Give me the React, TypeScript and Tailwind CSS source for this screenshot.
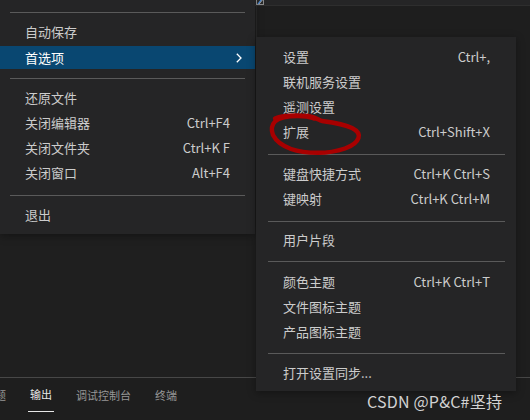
import React from "react";

type Row =
  | { kind: "item"; label: string; shortcut?: string; active?: boolean; sub?: boolean }
  | { kind: "sep"; cls: string };

const FONT = { fontFamily: '"Noto Sans CJK SC", "Noto Sans", sans-serif' };

const leftRows: Row[] = [
  { kind: "sep", cls: "h-[16px] pt-[8px]" },
  { kind: "item", label: "自动保存" },
  { kind: "item", label: "首选项", active: true, sub: true },
  { kind: "sep", cls: "h-[16px] pt-[8px]" },
  { kind: "item", label: "还原文件" },
  { kind: "item", label: "关闭编辑器", shortcut: "Ctrl+F4" },
  { kind: "item", label: "关闭文件夹", shortcut: "Ctrl+K F" },
  { kind: "item", label: "关闭窗口", shortcut: "Alt+F4" },
  { kind: "sep", cls: "h-[17px] pt-[9px]" },
  { kind: "item", label: "退出" },
];

const subRows: Row[] = [
  { kind: "item", label: "设置", shortcut: "Ctrl+," },
  { kind: "item", label: "联机服务设置" },
  { kind: "item", label: "遥测设置" },
  { kind: "item", label: "扩展", shortcut: "Ctrl+Shift+X" },
  { kind: "sep", cls: "h-[17px] pt-[9px]" },
  { kind: "item", label: "键盘快捷方式", shortcut: "Ctrl+K Ctrl+S" },
  { kind: "item", label: "键映射", shortcut: "Ctrl+K Ctrl+M" },
  { kind: "sep", cls: "h-[16px] pt-[9px]" },
  { kind: "item", label: "用户片段" },
  { kind: "sep", cls: "h-[17px] pt-[8px]" },
  { kind: "item", label: "颜色主题", shortcut: "Ctrl+K Ctrl+T" },
  { kind: "item", label: "文件图标主题" },
  { kind: "item", label: "产品图标主题" },
  { kind: "sep", cls: "h-[16px] pt-[8px]" },
  { kind: "item", label: "打开设置同步..." },
];

function Chevron() {
  return (
    <svg width="6" height="10" viewBox="0 0 6 10" className="ml-auto">
      <polyline points="0.8,0.8 5,5 0.8,9.2" fill="none" stroke="#ffffff" strokeWidth="1.3" />
    </svg>
  );
}

function LeftMenu() {
  return (
    <div className="absolute left-0 top-0 w-[255px] h-[234px] bg-[#252526] pt-[4px] shadow-[0_2px_8px_rgba(0,0,0,0.36)] flex flex-col">
      {leftRows.map((r, i) =>
        r.kind === "sep" ? (
          <div key={i} className={r.cls}>
            <div className="mx-[10px] h-px bg-[#5a5a5a]" />
          </div>
        ) : (
          <div key={i} className="h-[25px]">
            <div
              className={
                r.active
                  ? "h-[23px] mt-px flex items-center pl-[25px] pr-[13px] bg-[#094771] text-white"
                  : "h-[25px] pb-[1px] flex items-center pl-[25px] pr-[25px] text-[#cccccc]"
              }
            >
              <span>{r.label}</span>
              {r.shortcut && <span className="ml-auto">{r.shortcut}</span>}
              {r.sub && <Chevron />}
            </div>
          </div>
        )
      )}
    </div>
  );
}

function SubMenu() {
  return (
    <div className="absolute left-[256px] top-[37px] w-[260px] bg-[#252526] pt-[8px] pb-[5px] shadow-[0_2px_8px_rgba(0,0,0,0.36)] flex flex-col">
      {subRows.map((r, i) =>
        r.kind === "sep" ? (
          <div key={i} className={r.cls}>
            <div className="ml-[12px] mr-[11px] h-px bg-[#5a5a5a]" />
          </div>
        ) : (
          <div key={i} className="h-[25px] pb-[1px] flex items-center pl-[27px] pr-[26px] text-[#cccccc]">
            <span>{r.label}</span>
            {r.shortcut && <span className="ml-auto">{r.shortcut}</span>}
          </div>
        )
      )}
    </div>
  );
}

function RedCircle() {
  return (
    <svg
      className="absolute left-0 top-0 pointer-events-none"
      width="530"
      height="420"
      viewBox="0 0 530 420"
    >
      <path
        d="M275 118.5 C282 115.5 296 115 308 116 C315 117 318 119.5 322 121 C333 122.5 345 124.5 352 128 C358 131 359.5 135 358.5 138 C357 142.5 352 146 345 148.5 C336 151.5 327 152.8 318 152.8 C307 152.8 298 151.5 291 149 C283 146 276 141 273 135 C271 129.5 272 124.5 275 121.5 C279 117.5 287 116 298 116 C305 116 310 117 314 118.5"
        fill="none"
        stroke="#a80000"
        strokeWidth="4.4"
        strokeLinecap="round"
        strokeLinejoin="round"
      />
    </svg>
  );
}

export default function App() {
  return (
    <div
      className="relative w-[530px] h-[420px] overflow-hidden bg-[#1e1e1e] flex flex-col text-[13px]"
      style={FONT}
    >
      {/* top tab strip */}
      <div className="h-[5px] bg-[#252526] flex">
        <div className="w-[256px]" />
        <svg width="8" height="5" viewBox="0 0 8 5">
          <rect x="0.5" y="-1" width="7" height="5.5" fill="#2a2a2a" stroke="#8a8a8a" strokeWidth="1" />
          <line x1="2" y1="4" x2="6" y2="-1" stroke="#4a90e2" strokeWidth="1.2" />
          <line x1="3.2" y1="4" x2="6.8" y2="-0.5" stroke="#e8e8e8" strokeWidth="0.6" />
        </svg>
      </div>
      <div className="h-px bg-[#2e2e2e]" />
      {/* editor area */}
      <div className="flex-1 flex">
        <div className="w-[256px] bg-[#1f1f1f]" />
        <div className="flex-1 border-l border-[#2a2a2a] bg-[#1e1e1e]" />
      </div>
      {/* bottom panel */}
      <div className="h-[43px] border-t border-[#474747] bg-[#1e1e1e]">
        <div className="flex gap-[20px] ml-[-18px] text-[11px]">
          <div className="h-[34px] px-[2px] flex items-center text-[#969696]">问题</div>
          <div className="h-[34px] px-[2px] flex items-center text-[#e7e7e7] border-b border-[#e7e7e7]">输出</div>
          <div className="h-[34px] px-[2px] flex items-center text-[#969696]">调试控制台</div>
          <div className="h-[34px] px-[2px] flex items-center text-[#969696]">终端</div>
        </div>
      </div>

      <LeftMenu />
      <SubMenu />
      <RedCircle />

      <div className="absolute left-[367px] top-[389px] text-[16px] leading-[24px] text-[#d2d2d2] whitespace-nowrap tracking-[0.2px]">
        CSDN @P&amp;C#坚持
      </div>
    </div>
  );
}
